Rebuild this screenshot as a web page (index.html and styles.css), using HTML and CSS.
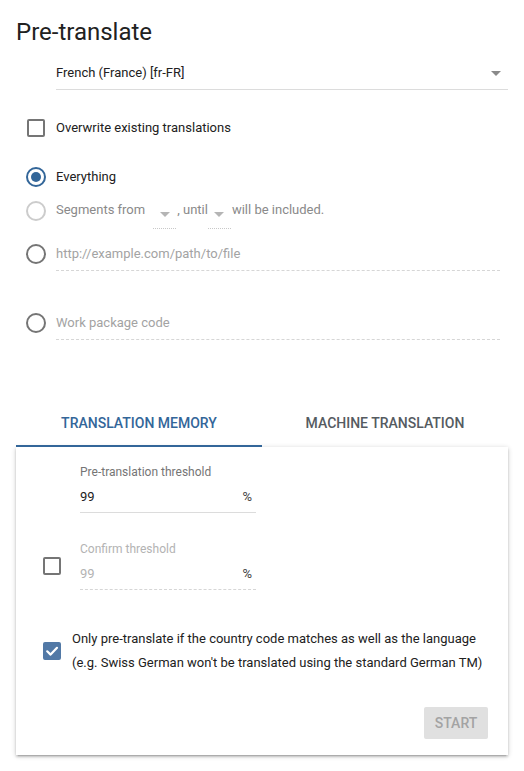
FILE: index.html
```html
<!DOCTYPE html>
<html>
<head>
<meta charset="utf-8">
<link rel="stylesheet" href="styles.css">
</head>
<body>
<div class="page">
  <h1 class="title">Pre-translate</h1>

  <div class="select">
    <span class="select-text">French (France) [fr-FR]</span>
    <span class="arrow"></span>
  </div>

  <div class="row check-row">
    <span class="checkbox"></span>
    <span class="label">Overwrite existing translations</span>
  </div>

  <div class="row radio-row everything">
    <span class="radio checked"></span>
    <span class="label">Everything</span>
  </div>

  <div class="row radio-row segments">
    <span class="radio disabled"></span>
    <span class="label muted">Segments from</span>
    <span class="mini-select first"><span class="arrow small"></span></span>
    <span class="label muted">, until</span>
    <span class="mini-select"><span class="arrow small"></span></span>
    <span class="label muted">will be included.</span>
  </div>

  <div class="row radio-row field-row url-row">
    <span class="radio"></span>
    <div class="dashed-field"><span class="placeholder">http://example.com/path/to/file</span></div>
  </div>

  <div class="row radio-row field-row code-row">
    <span class="radio"></span>
    <div class="dashed-field"><span class="placeholder">Work package code</span></div>
  </div>

  <div class="tabs">
    <div class="tab active">Translation memory</div>
    <div class="tab">Machine translation</div>
  </div>

  <div class="card">
    <div class="field threshold">
      <div class="field-label">Pre-translation threshold</div>
      <div class="field-input solid"><span class="value">99</span><span class="unit">%</span></div>
    </div>

    <div class="confirm-row">
      <span class="checkbox"></span>
      <div class="field">
        <div class="field-label disabled-text">Confirm threshold</div>
        <div class="field-input dashed"><span class="value disabled-text">99</span><span class="unit">%</span></div>
      </div>
    </div>

    <div class="country-row">
      <span class="checkbox checked">
        <svg viewBox="0 0 18 18" width="18" height="18"><path d="M4.2 9.3 L7.6 12.6 L14 5.8" fill="none" stroke="#fff" stroke-width="2.2" stroke-linecap="round" stroke-linejoin="round"/></svg>
      </span>
      <div class="country-text">Only pre-translate if the country code matches as well as the language<br>(e.g. Swiss German won't be translated using the standard German TM)</div>
    </div>

    <div class="actions">
      <button class="start" disabled>START</button>
    </div>
  </div>
</div>
</body>
</html>
```

FILE: styles.css
```css
html, body {
  margin: 0;
  padding: 0;
  background: #ffffff;
}

body {
  font-family: Roboto, "Liberation Sans", sans-serif;
  color: #212121;
  font-size: 13px;
}

.page {
  padding: 16px 16px 16px;
  min-height: 771px;
  box-sizing: border-box;
}

.title {
  margin: 0;
  font-size: 24px;
  font-weight: 400;
  line-height: 32px;
  height: 32px;
  color: #212121;
}

.select {
  margin: 8px 0 0 40px;
  height: 33px;
  border-bottom: 1px solid #dcdcdc;
  display: flex;
  align-items: center;
  justify-content: space-between;
  line-height: 32px;
}

.select-text {
  font-size: 13px;
  color: #212121;
}

.arrow {
  width: 0;
  height: 0;
  border-left: 5px solid transparent;
  border-right: 5px solid transparent;
  border-top: 5px solid #8a8a8a;
  margin-right: 7px;
  margin-top: 1px;
}

.arrow.small {
  border-top-color: #b5b5b5;
  margin: 0;
}

.row {
  display: flex;
  align-items: center;
}

.check-row {
  margin-top: 21px;
  height: 34px;
  padding-left: 11px;
}

.checkbox {
  width: 18px;
  height: 18px;
  box-sizing: border-box;
  border: 2px solid #757575;
  border-radius: 2px;
  flex: none;
  display: inline-flex;
  align-items: center;
  justify-content: center;
}

.checkbox.checked {
  background: #5279a6;
  border-color: #5279a6;
}

.checkbox.checked svg {
  flex: none;
}

.check-row .label {
  margin-left: 11px;
}

.label {
  font-size: 13px;
  line-height: 32px;
  color: #212121;
}

.label.muted {
  color: #8a8a8a;
}

.radio-row {
  padding-left: 10px;
}

.radio {
  width: 20px;
  height: 20px;
  box-sizing: border-box;
  border: 2px solid #757575;
  border-radius: 50%;
  flex: none;
  margin-right: 10px;
  display: inline-flex;
  align-items: center;
  justify-content: center;
}

.radio.checked {
  border-color: #336699;
}

.radio.checked::after {
  content: "";
  width: 10px;
  height: 10px;
  border-radius: 50%;
  background: #336699;
}

.radio.disabled {
  border-color: #cccccc;
}

.everything {
  margin-top: 16px;
  height: 32px;
}

.segments {
  margin-top: 1px;
  align-items: flex-start;
  height: 36px;
}

.segments .radio {
  margin-top: 7px;
}

.mini-select {
  width: 23px;
  height: 35px;
  border-bottom: 1px dotted #c8c8c8;
  display: flex;
  justify-content: center;
  padding-top: 18px;
  box-sizing: border-box;
  flex: none;
}

.mini-select.first {
  margin-left: 8px;
}

.mini-select + .label {
  margin-left: 1px;
}

.field-row .dashed-field {
  flex: 1;
  height: 34px;
  box-sizing: border-box;
  border-bottom: 1px dashed #d6d6d6;
  line-height: 33px;
  margin-right: 8px;
}

.url-row {
  margin-top: 7px;
}

.code-row {
  margin-top: 35px;
}

.placeholder {
  font-size: 13px;
  color: #a3a3a3;
}

.tabs {
  margin-top: 59px;
  display: flex;
  height: 48px;
}

.tab {
  flex: 1;
  display: flex;
  align-items: center;
  justify-content: center;
  text-transform: uppercase;
  font-size: 14px;
  font-weight: 500;
  color: #555b61;
  box-sizing: border-box;
  padding-top: 2px;
  border-bottom: 2px solid transparent;
}

.tab.active {
  color: #336699;
  border-bottom-color: #336699;
}

.card {
  background: #fff;
  box-shadow: 0 1px 5px rgba(0, 0, 0, 0.2), 0 2px 2px rgba(0, 0, 0, 0.14), 0 3px 1px -2px rgba(0, 0, 0, 0.12);
  padding: 17px 20px 16px 27px;
}

.field {
  width: 176px;
}

.threshold {
  margin-left: 37px;
}

.field-label {
  font-size: 12px;
  line-height: 16px;
  height: 16px;
  color: #757575;
}

.field-input {
  height: 33px;
  box-sizing: border-box;
  display: flex;
  justify-content: space-between;
  align-items: center;
  padding-right: 4px;
}

.field-input.solid {
  border-bottom: 1px solid #dcdcdc;
}

.field-input.dashed {
  border-bottom: 1px dashed #d6d6d6;
}

.value {
  font-size: 13px;
  color: #212121;
}

.unit {
  font-size: 13px;
  color: #424242;
}

.disabled-text,
.value.disabled-text {
  color: #b3b3b3;
}

.confirm-row {
  margin-top: 28px;
  display: flex;
  align-items: center;
  gap: 19px;
}

.country-row {
  margin-top: 37px;
  display: flex;
  align-items: center;
  gap: 11px;
}

.country-text {
  font-size: 13px;
  line-height: 24px;
  color: #212121;
  white-space: nowrap;
}

.actions {
  margin-top: 32px;
  display: flex;
  justify-content: flex-end;
}

.start {
  width: 64px;
  height: 32px;
  border: none;
  border-radius: 2px;
  background: #e0e0e0;
  color: #a3a3a3;
  font-family: Roboto, "Liberation Sans", sans-serif;
  font-size: 14px;
  font-weight: 500;
  padding: 0;
}
```
